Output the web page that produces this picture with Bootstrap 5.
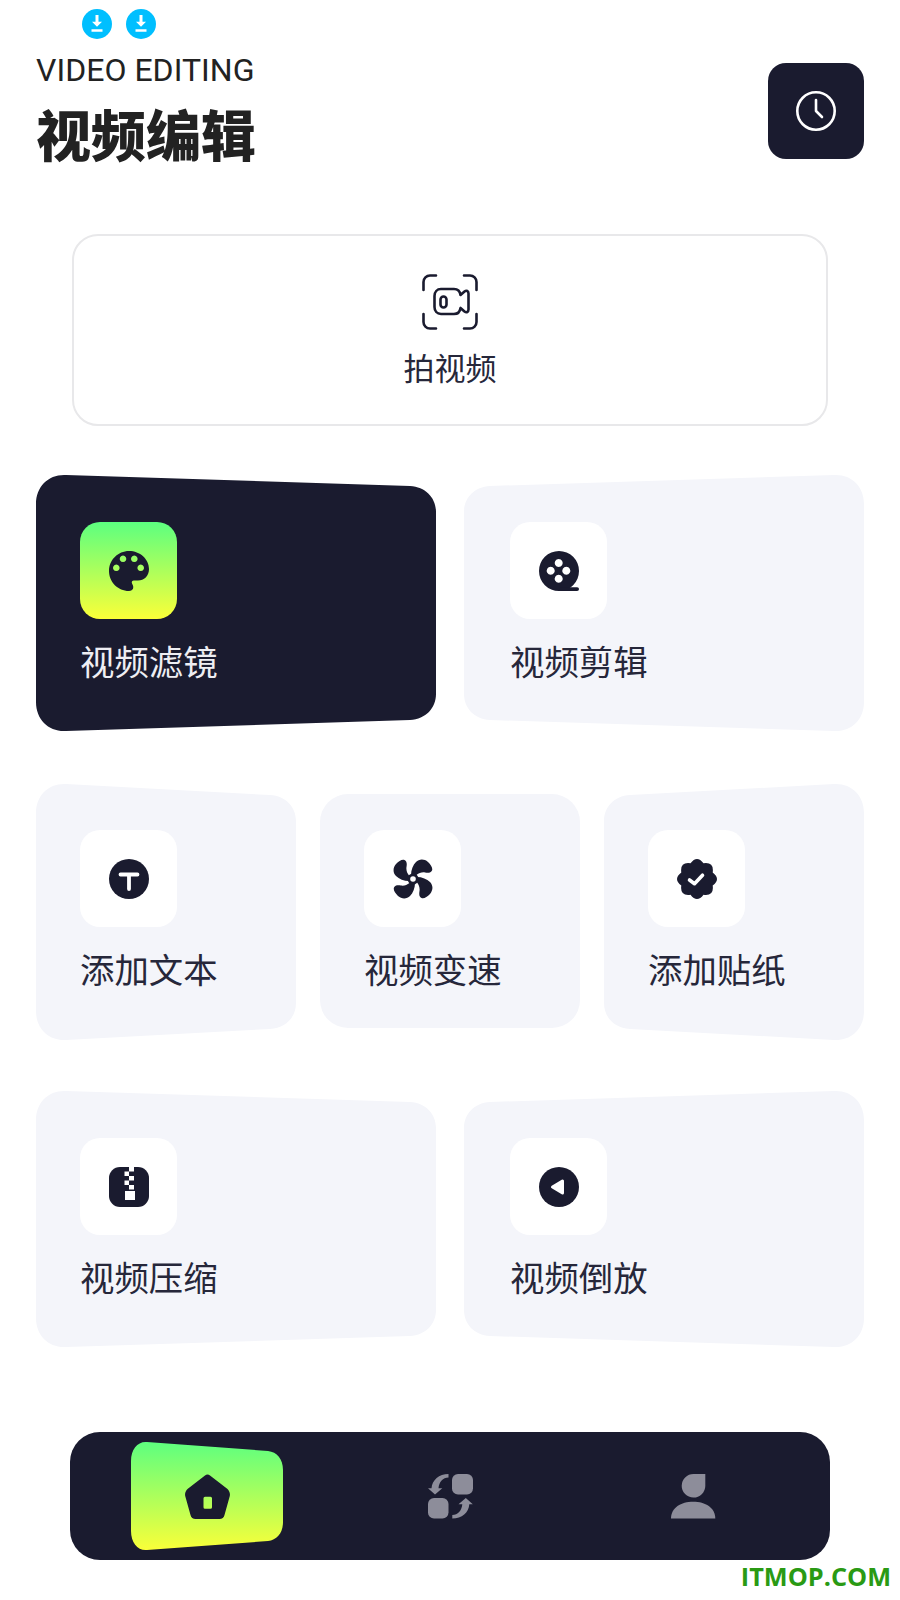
<!DOCTYPE html>
<html lang="zh-CN">
<head>
    <meta charset="UTF-8">
    <title>视频编辑</title>
    <link href="https://cdn.jsdelivr.net/npm/bootstrap@5.3.3/dist/css/bootstrap.min.css" rel="stylesheet">
    <style>
        body {
            background: #fff;
            color: #1a1b2f;
            font-family: Roboto, "Noto Sans CJK SC", sans-serif;
            position: relative;
            height: 1600px;
            overflow: hidden;
        }
        .page-wrap {
            padding: 0 36px;
        }
        .dl-row {
            padding: 9px 0 0 46px;
            gap: 14px;
        }
        .dl-row svg {
            width: 30px;
            height: 30px;
        }
        .head-row {
            margin-top: 12px;
        }
        .en-title {
            font-size: 32px;
            line-height: 38px;
            letter-spacing: .03px;
            color: #222;
        }
        .cn-title {
            font-family: "Noto Sans CJK SC", sans-serif;
            font-size: 55px;
            line-height: 60px;
            font-weight: 900;
            color: #222;
            margin-top: 13px;
        }
        .clock-btn {
            width: 96px;
            height: 96px;
            margin-top: 12px;
            background: #1a1b2f;
            border-radius: 18px;
        }
        .shoot-box {
            height: 192px;
            margin: 72px 36px 0;
            padding-top: 38px;
            border: 2px solid #e8e8ea;
            border-radius: 26px;
        }
        .shoot-label {
            margin-top: 17px;
            font-family: "Noto Sans CJK SC", sans-serif;
            font-size: 31px;
            line-height: 40px;
            color: #26273a;
        }
        .tile {
            position: relative;
            height: 257px;
            padding: 48px 0 0 44px;
        }
        .tile::before {
            content: "";
            position: absolute;
            top: 0;
            right: 0;
            bottom: 0;
            left: 0;
            background: #f4f5fa;
        }
        .tile > * {
            position: relative;
        }
        .tile-wide {
            width: 400px;
        }
        .tile-wide::before {
            clip-path: path("M0 30C0 12 13 0 30 1L374 12C390 13 400 24 400 38V220C400 234 390 245 374 246L30 257C13 258 0 246 0 228Z");
        }
        .tile-narrow {
            width: 260px;
        }
        .tile-narrow::before {
            clip-path: path("M0 30C0 12 13 0 30 1L234 12C250 13 260 24 260 38V220C260 234 250 245 234 246L30 257C13 258 0 246 0 228Z");
        }
        .tile-flip::before {
            transform: scaleX(-1);
        }
        .tile-right {
            padding-left: 46px;
        }
        .tile-flat::before {
            clip-path: inset(11px 0 12px 0 round 28px);
        }
        .tile-dark::before {
            background: #1a1b2f;
        }
        .tile-dark .tile-label {
            color: #eeeef3;
        }
        .first-row {
            margin-top: 48px;
            height: 258px;
        }
        .second-row {
            margin-top: 50px;
        }
        .second-row .tile::before {
            top: 1px;
            bottom: -1px;
        }
        .third-row {
            margin-top: 51px;
        }
        .icon-box {
            width: 97px;
            height: 97px;
            background: #fff;
            border-radius: 20px;
        }
        .icon-box svg {
            width: 40px;
            height: 40px;
        }
        .icon-green {
            background: linear-gradient(180deg, #5cff80, #fbff38);
        }
        .tile-label {
            margin-top: 21px;
            font-family: "Noto Sans CJK SC", sans-serif;
            font-size: 34.4px;
            line-height: 40px;
            color: #26273a;
        }
        .bottom-bar {
            width: 760px;
            height: 128px;
            margin: 85px 0 0 70px;
            padding: 0 61px;
            background: #1a1b2f;
            border-radius: 30px;
        }
        .bar-item {
            width: 152px;
            height: 110px;
        }
        .bar-item svg {
            width: 45px;
            height: 45px;
        }
        .bar-active {
            background: linear-gradient(180deg, #5cff80, #fbff38);
            clip-path: path("M0 20C0 8 7 0 16 1L137 10C146 11 152 18 152 29V81C152 92 146 99 137 100L16 109C7 110 0 102 0 90Z");
        }
        .watermark {
            position: absolute;
            right: 9px;
            bottom: 8px;
            font-family: "Open Sans", sans-serif;
            font-size: 25.3px;
            line-height: 32px;
            font-weight: 700;
            color: #2a9a14;
        }
    </style>
</head>
<body>
<div class="page-wrap">
    <!-- notification icons -->
    <div class="d-flex dl-row">
        <svg viewBox="0 0 30 30"><circle cx="15" cy="15" r="15" fill="#00bfff"/><path d="M13.500 6h3v6.700H20l-5 5-5-5h3.500zM9.500 20.300h11v2.400h-11z" fill="#fff"/></svg>
        <svg viewBox="0 0 30 30"><circle cx="15" cy="15" r="15" fill="#00bfff"/><path d="M13.500 6h3v6.700H20l-5 5-5-5h3.500zM9.500 20.300h11v2.400h-11z" fill="#fff"/></svg>
    </div>

    <div class="d-flex justify-content-between head-row">
        <div>
            <div class="en-title">VIDEO EDITING</div>
            <div class="cn-title">视频编辑</div>
        </div>
        <div class="clock-btn d-flex align-items-center justify-content-center">
            <svg width="42" height="42" viewBox="0 0 42 42" fill="none" stroke="#fff" stroke-width="2.600" stroke-linecap="round" stroke-linejoin="round"><circle cx="21" cy="21" r="18.700"/><path d="M21 10v11l6 6"/></svg>
        </div>
    </div>

    <div class="shoot-box d-flex flex-column align-items-center">
        <svg width="56" height="56" viewBox="0 0 56 56" fill="none" stroke="#1a1b2f" stroke-width="2.600" stroke-linecap="round" stroke-linejoin="round">
            <path d="M14 1.500H8a6.500 6.500 0 0 0-6.500 6.500v8M42 1.500h6A6.500 6.500 0 0 1 54.500 8v8M14 54.500H8A6.500 6.500 0 0 1 1.500 48v-8M42 54.500h6a6.500 6.500 0 0 0 6.500-6.500v-8"/>
            <path d="M19 15h13c4 0 6 2.500 6.500 6l4-3.500c2-1.500 4-.5 4 2v16c0 2.500-2 3.500-4 2l-4-3.500c-.5 3.500-2.500 6-6.500 6H19c-4 0-6.500-3-6.500-7V22c0-4 2.500-7 6.500-7z"/>
            <rect x="18.500" y="22.500" width="6" height="11" rx="3"/>
        </svg>
        <div class="shoot-label">拍视频</div>
    </div>

    <div class="d-flex justify-content-between first-row">
        <div class="tile tile-wide tile-dark">
            <div class="icon-box icon-green d-flex align-items-center justify-content-center">
                <svg viewBox="0 0 40 40"><path fill="#1a1b2f" fill-rule="evenodd" d="M20 0C31 0 40 8 40 18C40 25 35 29.500 29 29.500H25.500C23 29.500 22 31 23.500 33.500C25 36 24.500 40 20 40C9 40 0 31 0 20C0 9 9 0 20 0ZM14 4.500a3.300 3.300 0 1 0 .01 0ZM25.300 4.500a3.300 3.300 0 1 0 .01 0ZM7.300 13.500a3.300 3.300 0 1 0 .01 0ZM31.700 13.500a3.300 3.300 0 1 0 .01 0Z"/></svg>
            </div>
            <div class="tile-label">视频滤镜</div>
        </div>
        <div class="tile tile-wide tile-flip tile-right">
            <div class="icon-box d-flex align-items-center justify-content-center">
                <svg viewBox="0 0 40 40">
                    <path fill="#1a1b2f" fill-rule="evenodd" d="M20 0A20 20 0 1 1 20 40A20 20 0 1 1 20 0ZM19.700 8a4 4 0 1 0 .01 0ZM11.700 15.700a4 4 0 1 0 .01 0ZM27.300 15.700a4 4 0 1 0 .01 0ZM19.700 23.700a4 4 0 1 0 .01 0Z"/>
                    <rect x="20" y="36.200" width="20" height="3.800" rx="1.900" fill="#1a1b2f"/>
                </svg>
            </div>
            <div class="tile-label">视频剪辑</div>
        </div>
    </div>

    <div class="d-flex justify-content-between second-row">
        <div class="tile tile-narrow">
            <div class="icon-box d-flex align-items-center justify-content-center">
                <svg viewBox="0 0 40 40"><circle cx="20" cy="20" r="20" fill="#1a1b2f"/><path d="M11.500 15.500h17M20 15.500V30" fill="none" stroke="#fff" stroke-width="3.800" stroke-linecap="round"/></svg>
            </div>
            <div class="tile-label">添加文本</div>
        </div>
        <div class="tile tile-narrow tile-flat">
            <div class="icon-box d-flex align-items-center justify-content-center">
                <svg viewBox="0 0 40 40">
                    <g fill="#1a1b2f">
                        <path id="fanBlade" d="M18 16C18 11 20 6 23 3C26 0 31-.5 35 3C38 6 40 9 39 11.500C38 14 35 14 32 13.500C29 13 26 14 23.500 16L21 18Z"/>
                        <use href="#fanBlade" transform="rotate(90 20 20)"/>
                        <use href="#fanBlade" transform="rotate(180 20 20)"/>
                        <use href="#fanBlade" transform="rotate(270 20 20)"/>
                        <circle cx="20" cy="20" r="5.500"/>
                    </g>
                    <circle cx="20" cy="20" r="2.800" fill="#fff"/>
                </svg>
            </div>
            <div class="tile-label">视频变速</div>
        </div>
        <div class="tile tile-narrow tile-flip">
            <div class="icon-box d-flex align-items-center justify-content-center">
                <svg viewBox="0 0 40 40">
                    <path transform="translate(20 20)" fill="#1a1b2f" d="M6.500-15.700Q17.200-17.200 15.700-6.500Q24.300 0 15.700 6.500Q17.200 17.200 6.500 15.700Q0 24.300-6.500 15.700Q-17.200 17.200-15.700 6.500Q-24.300 0-15.700-6.500Q-17.200-17.200-6.500-15.700Q0-24.300 6.500-15.700Z"/>
                    <path d="M12.500 21l5 3.700 8-8.500" fill="none" stroke="#fff" stroke-width="3.600" stroke-linecap="round" stroke-linejoin="round"/>
                </svg>
            </div>
            <div class="tile-label">添加贴纸</div>
        </div>
    </div>

    <div class="d-flex justify-content-between third-row">
        <div class="tile tile-wide">
            <div class="icon-box d-flex align-items-center justify-content-center">
                <svg viewBox="0 0 40 40">
                    <rect width="40" height="40" rx="11" fill="#1a1b2f"/>
                    <path fill="#fff" d="M20 0h5v4.500h-5zM15.500 4.500H20V9h-4.500zM20 9h5v4.500h-5zM15.500 13.500H20V18h-4.500zM20 18h5v4.500h-5zM16 24h10v9H16z"/>
                </svg>
            </div>
            <div class="tile-label">视频压缩</div>
        </div>
        <div class="tile tile-wide tile-flip tile-right">
            <div class="icon-box d-flex align-items-center justify-content-center">
                <svg viewBox="0 0 40 40"><circle cx="20" cy="20" r="20" fill="#1a1b2f"/><path d="M13.500 20L23.500 14V26Z" fill="#fff" stroke="#fff" stroke-width="3" stroke-linejoin="round"/></svg>
            </div>
            <div class="tile-label">视频倒放</div>
        </div>
    </div>
</div>

<div class="bottom-bar d-flex justify-content-between align-items-center">
    <div class="bar-item bar-active d-flex align-items-center justify-content-center">
        <svg viewBox="0 0 45 45"><path fill="#1a1b2f" fill-rule="evenodd" d="M20 1.500C21.500 0 23.500 0 25 1.500L42.500 15C44.500 17 45.300 19.500 44.800 22L39.500 41C39 43.500 37 45 34.500 45H10.500C8 45 6 43.500 5.500 41L.2 22C-.3 19.500.5 17 2.500 15ZM20 22.700a1.500 1.500 0 0 0-1.500 1.500v9a1.500 1.500 0 0 0 1.500 1.500h5.500a1.500 1.500 0 0 0 1.500-1.500v-9a1.500 1.500 0 0 0-1.500-1.500Z"/></svg>
    </div>
    <div class="bar-item d-flex align-items-center justify-content-center">
        <svg viewBox="0 0 45 45" fill="#8d8d9a">
            <rect x="24" y="0" width="21" height="20.500" rx="6"/>
            <rect x="0" y="24" width="20.500" height="20.500" rx="6"/>
            <path id="swapArrow" d="M20.500 0V3.500C15 3.500 11 8 10.500 14.300H14.300L7 20.500 0 14.300H3.500C4 6 11 0 20.500 0Z"/>
            <use href="#swapArrow" transform="rotate(180 22.400 22.250)"/>
        </svg>
    </div>
    <div class="bar-item d-flex align-items-center justify-content-center">
        <svg viewBox="0 0 45 45" fill="#8d8d9a">
            <path d="M22.500 0H34.300V12A11.800 11.800 0 1 1 22.500 0Z"/>
            <path d="M0 44.500C0 33.500 10 27.700 22.200 27.700C34.300 27.700 44.300 33.500 44.300 44.500Z"/>
        </svg>
    </div>
</div>

<div class="watermark">ITMOP.COM</div>

<script src="https://cdn.jsdelivr.net/npm/bootstrap@5.3.3/dist/js/bootstrap.bundle.min.js"></script>
</body>
</html>
